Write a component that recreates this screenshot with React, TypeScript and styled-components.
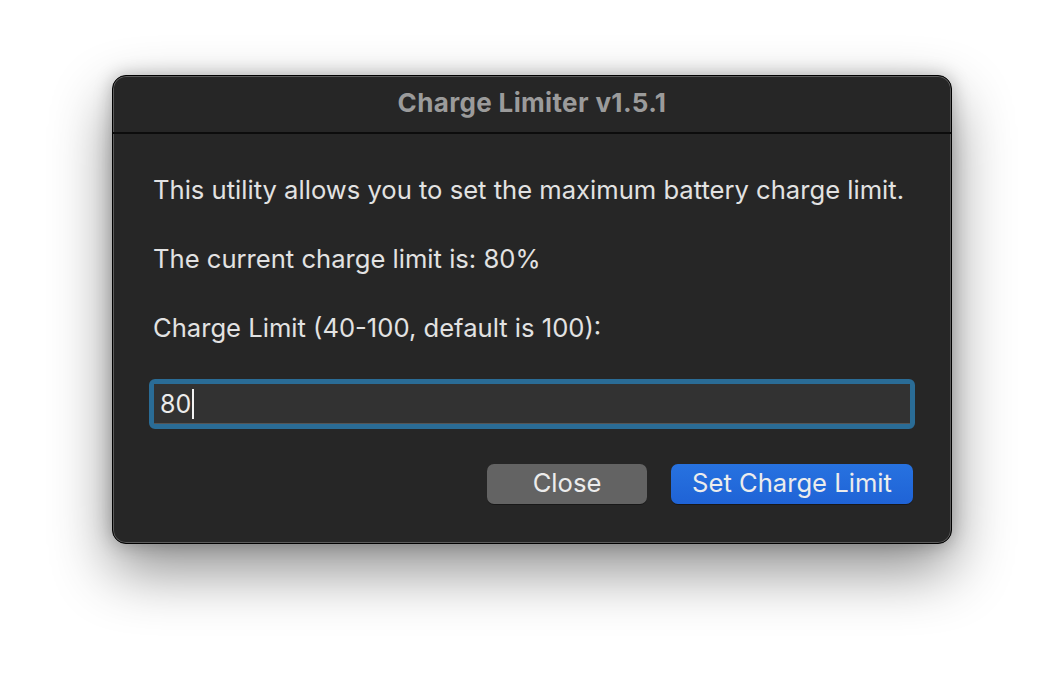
import React from "react";
import styled, { createGlobalStyle } from "styled-components";

const GlobalStyle = createGlobalStyle`
  html, body {
    margin: 0;
    padding: 0;
    background: #ffffff;
  }
  body {
    font-family: Inter, "Liberation Sans", sans-serif;
  }
`;

const Page = styled.div`
  width: 1064px;
  height: 692px;
  display: flex;
  justify-content: center;
  align-items: flex-start;
  padding-top: 75px;
  box-sizing: border-box;
  overflow: hidden;
`;

const Window = styled.div`
  width: 840px;
  height: 469px;
  box-sizing: border-box;
  background: #262626;
  border-radius: 14px;
  border: 1px solid #000;
  box-shadow: inset 0 0 0 1px #5c5c5c, 0 26px 60px rgba(0, 0, 0, 0.45),
    0 0 18px rgba(0, 0, 0, 0.25);
  display: flex;
  flex-direction: column;
  overflow: hidden;
`;

const TitleBar = styled.div`
  height: 58px;
  flex-shrink: 0;
  display: flex;
  align-items: center;
  justify-content: center;
  padding-bottom: 3px;
  box-sizing: border-box;
  border-bottom: 2px solid #0c0c0c;
  color: #9b9b9b;
  font-size: 26px;
  font-weight: 700;
  letter-spacing: 0.35px;
`;

const Body = styled.div`
  flex: 1;
  display: flex;
  flex-direction: column;
  padding: 41px 36px 0 40px;
`;

const TextGroup = styled.div`
  display: flex;
  flex-direction: column;
  gap: 39px;
`;

const Line = styled.p`
  margin: 0;
  color: #e2e2e2;
  font-size: 25.6px;
  line-height: 30px;
`;

const FieldRing = styled.div`
  margin: 36px 0 0 -4px;
  border: 5px solid #2a6c96;
  border-radius: 6px;
  height: 50px;
  box-sizing: border-box;
  display: flex;
`;

const Field = styled.div`
  flex: 1;
  background: #323232;
  border-bottom: 1px solid #555;
  display: flex;
  align-items: center;
  padding-left: 6px;
  color: #ececec;
  font-size: 25px;
`;

const Caret = styled.span`
  display: inline-block;
  width: 2px;
  height: 30px;
  background: #f2f2f2;
  margin-left: 1px;
`;

const Actions = styled.div`
  display: flex;
  justify-content: flex-end;
  gap: 24px;
  margin-top: 35px;
  margin-right: 2px;
`;

const Button = styled.button<{ $primary?: boolean }>`
  height: 40px;
  width: ${(p) => (p.$primary ? "242px" : "160px")};
  border: none;
  border-radius: 7px;
  font-family: inherit;
  font-size: 25.6px;
  color: #ececec;
  background: ${(p) =>
    p.$primary ? "linear-gradient(#2772e0, #1f63d6)" : "#636363"};
  box-shadow: 0 1px 0 rgba(0, 0, 0, 0.35);
  padding: 0 0 3px 0;
`;

export default function App() {
  return (
    <Page>
      <GlobalStyle />
      <Window>
        <TitleBar>Charge Limiter v1.5.1</TitleBar>
        <Body>
          <TextGroup>
            <Line>This utility allows you to set the maximum battery charge limit.</Line>
            <Line>The current charge limit is: 80%</Line>
            <Line>Charge Limit (40-100, default is 100):</Line>
          </TextGroup>
          <FieldRing>
            <Field>
              80
              <Caret />
            </Field>
          </FieldRing>
          <Actions>
            <Button>Close</Button>
            <Button $primary>Set Charge Limit</Button>
          </Actions>
        </Body>
      </Window>
    </Page>
  );
}
